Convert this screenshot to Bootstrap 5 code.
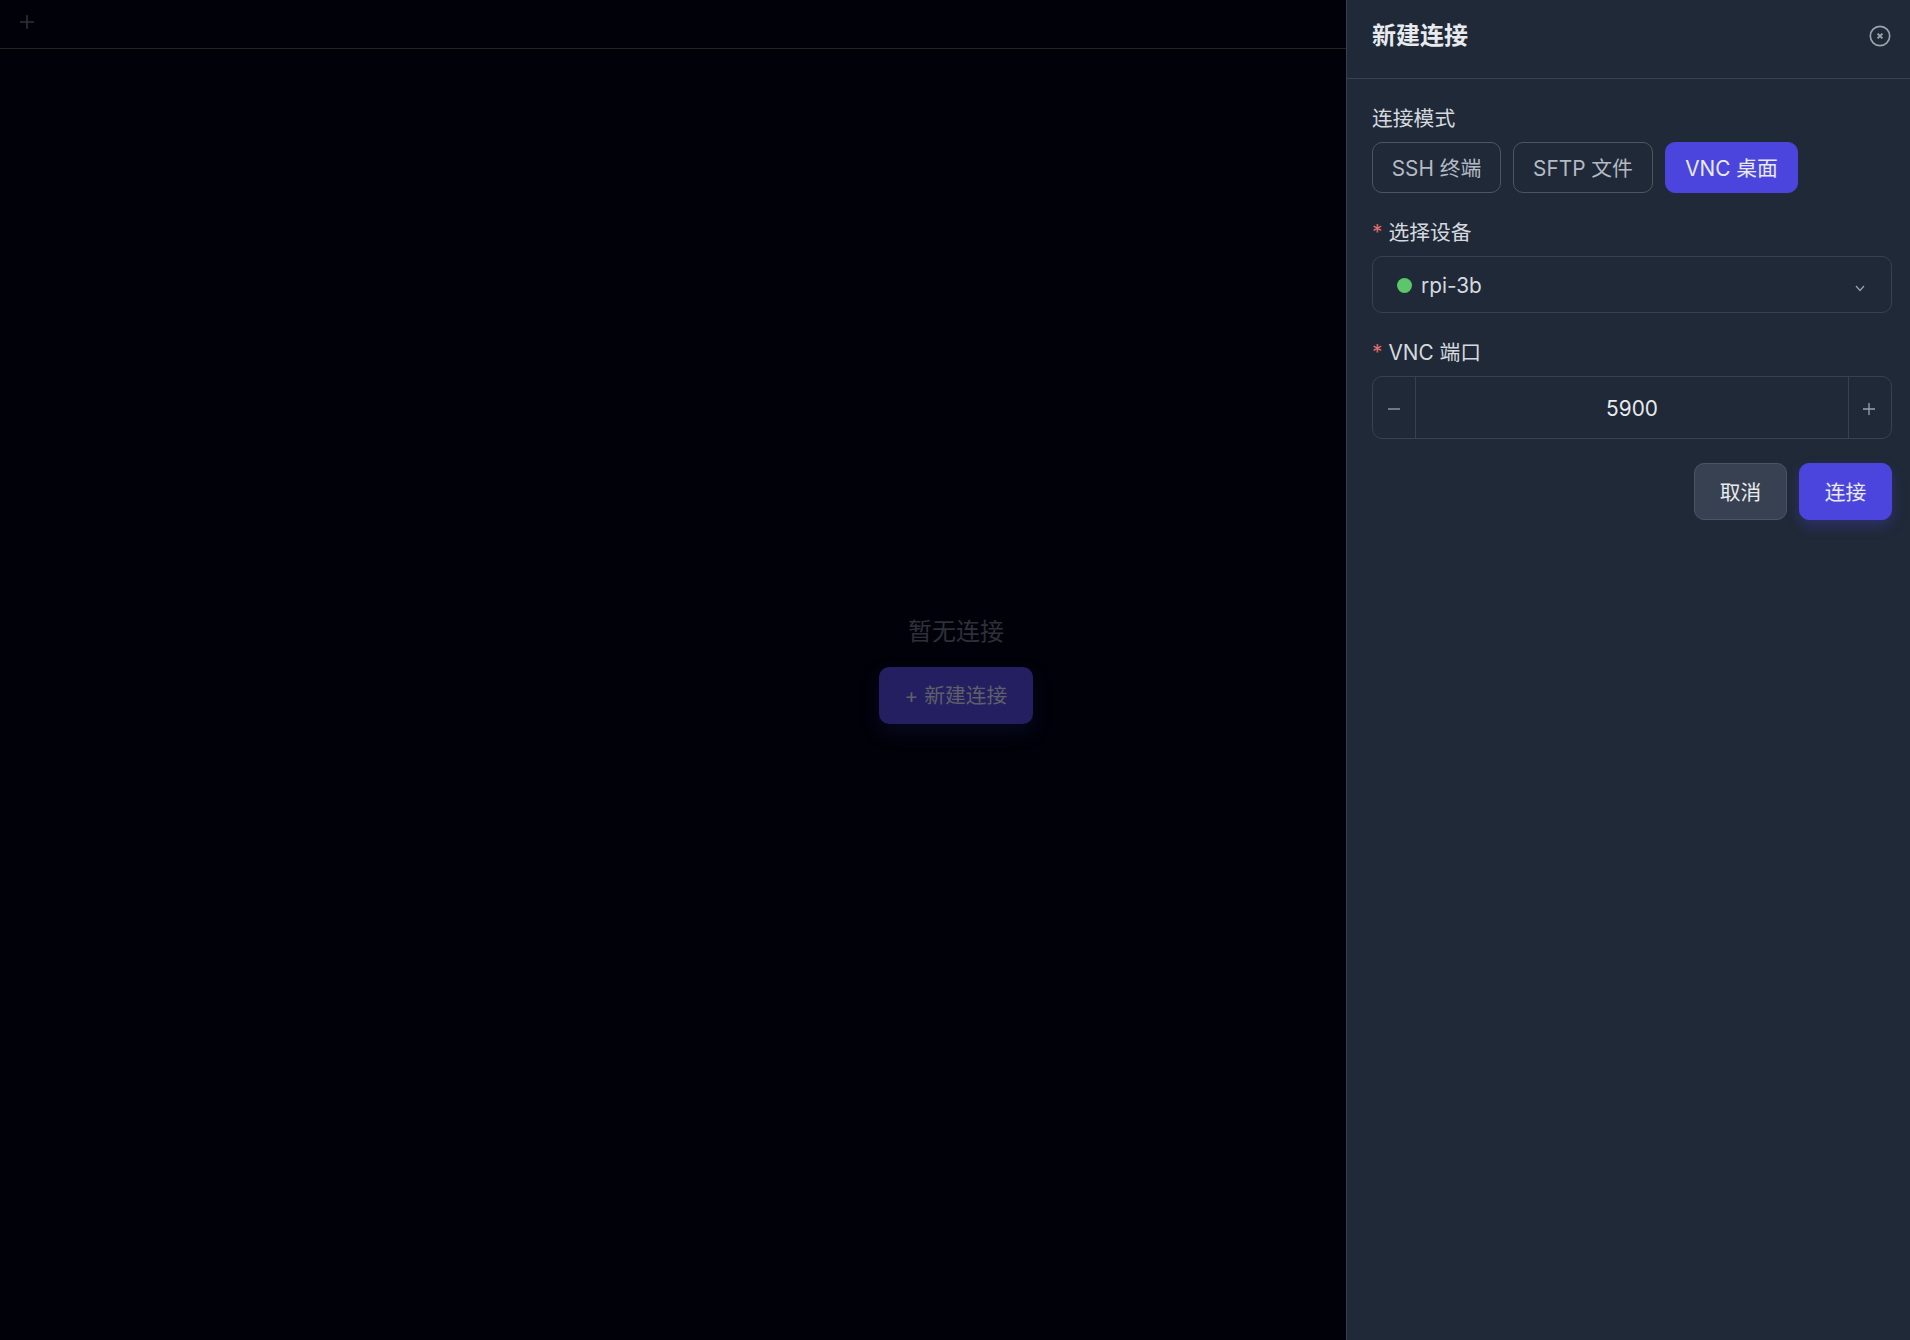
<!DOCTYPE html>
<html lang="zh"><head><meta charset="utf-8">
<link href="https://cdn.jsdelivr.net/npm/bootstrap@5.3.0/dist/css/bootstrap.min.css" rel="stylesheet">
<style>
html,body{height:100%;margin:0;overflow:hidden}
body{background:#010209;font-family:Inter,"Noto Sans CJK SC",sans-serif;color:#e5e7eb;-webkit-font-smoothing:antialiased}
.app-shell{height:1340px}
.tab-strip{height:49px;border-bottom:1px solid #23241f;padding:0 0 0 18px}
.tab-add{width:18px;height:18px;margin-top:-5px;color:#2f3138;display:block}
.empty-wrap{padding-left:2px}
.empty-msg{color:#2e3039;font-size:24px;line-height:32px;margin:-50px 0 19px}
.empty-btn{background:#231f60;color:#5f5f6a;border:0;border-radius:10px;height:57px;width:154px;font-size:20.8px;padding:2px 0 0;box-shadow:0 8px 18px rgba(30,27,90,.3)}
.side-pane{position:absolute;top:0;right:0;bottom:0;width:564px;background:#1f2937;border-left:1px solid #374151}
.side-head{height:79px;border-bottom:1px solid #374151;padding:0 19px 0 25px}
.side-title{font-size:24px;font-weight:600;color:#e8eaee;margin:0 0 5px}
.close-ico{width:22px;height:22px;color:#9ca3af;display:block;margin-bottom:7px}
.side-body{padding:26px 18px 0 25px}
.fld-label{font-size:20.8px;line-height:28px;color:#d5d9df;margin-bottom:9px;display:block}
.req{color:#e06c6c;margin-right:6px}
.mode-btn{height:51px;border:1px solid #4b5563;border-radius:10px;background:transparent;color:#b4bac4;font-size:20.8px;padding:2px 0 0;width:129px}
.mode-btn.wide-b{width:140px}
.mode-btn.on{background:#4c45dd;border-color:#4c45dd;color:#e8eaf0;width:133px}
.dev-select{height:57px;border:1px solid #374151;border-radius:10px;padding:2px 26px 0 24px;font-size:20.8px;color:#d5d9df}
.dev-dot{width:15px;height:15px;border-radius:50%;background:#5cc66a;margin-right:9px;margin-top:-1px}
.chev{width:10px;height:7px;color:#9ca3af;margin-top:6px}
.num-box{height:63px;border:1px solid #374151;border-radius:10px;font-size:20.8px;color:#e8eaee}
.num-side{width:43px;flex:none;color:#9ca3af}
.num-side.lft{border-right:1px solid #374151}
.num-side.rgt{border-left:1px solid #374151;padding-right:2px}
.num-mid{padding-top:2px}
.num-ico{width:14px;height:14px;display:block;margin-top:2px}
.act-btn{height:57px;border-radius:10px;font-size:20.8px;width:93px;padding:2px 0 0;border:1px solid #4b5563;background:#374151;color:#e8eaee}
.act-btn.go{border-color:#4c45dd;background:#4c45dd;box-shadow:0 6px 14px rgba(79,70,229,.3)}
.gap-mode{gap:12px}.gap-acts{gap:12px}
.mb-a{margin-bottom:26px}.mb-b{margin-bottom:26px}.mb-c{margin-bottom:24px}
</style></head><body>
<div class="app-shell d-flex flex-column position-relative">
  <div class="tab-strip d-flex align-items-center">
    <svg class="tab-add" viewBox="0 0 18 18" fill="none" stroke="currentColor" stroke-width="1.6"><path d="M9 2v14M2 9h14"/></svg>
  </div>
  <div class="empty-wrap flex-grow-1 d-flex flex-column align-items-center justify-content-center">
    <div class="empty-msg">暂无连接</div>
    <button class="btn empty-btn">+ 新建连接</button>
  </div>
  <aside class="side-pane d-flex flex-column">
    <div class="side-head d-flex align-items-center justify-content-between">
      <h5 class="side-title">新建连接</h5>
      <svg class="close-ico" viewBox="0 0 20 20" fill="none" stroke="currentColor" stroke-width="1.5"><circle cx="10" cy="10" r="8.8"/><path d="M7.8 7.8l4.4 4.4M12.2 7.8l-4.4 4.4" stroke-width="1.8"/></svg>
    </div>
    <div class="side-body">
      <label class="fld-label">连接模式</label>
      <div class="d-flex gap-mode mb-a">
        <button class="btn mode-btn">SSH 终端</button>
        <button class="btn mode-btn wide-b">SFTP 文件</button>
        <button class="btn mode-btn on">VNC 桌面</button>
      </div>
      <label class="fld-label"><span class="req">*</span>选择设备</label>
      <div class="dev-select d-flex align-items-center justify-content-between mb-b">
        <span class="d-flex align-items-center"><span class="dev-dot"></span>rpi-3b</span>
        <svg class="chev" viewBox="0 0 10 7" fill="none" stroke="currentColor" stroke-width="1.2"><path d="M1 1l4 4.5L9 1"/></svg>
      </div>
      <label class="fld-label"><span class="req">*</span>VNC 端口</label>
      <div class="num-box d-flex mb-c">
        <div class="num-side lft d-flex align-items-center justify-content-center"><svg class="num-ico" viewBox="0 0 14 14" fill="none" stroke="currentColor" stroke-width="1.3"><path d="M1 7h12"/></svg></div>
        <div class="num-mid flex-grow-1 d-flex align-items-center justify-content-center">5900</div>
        <div class="num-side rgt d-flex align-items-center justify-content-center"><svg class="num-ico" viewBox="0 0 14 14" fill="none" stroke="currentColor" stroke-width="1.3"><path d="M7 1v12M1 7h12"/></svg></div>
      </div>
      <div class="d-flex justify-content-end gap-acts">
        <button class="btn act-btn">取消</button>
        <button class="btn act-btn go">连接</button>
      </div>
    </div>
  </aside>
</div>
<script src="https://cdn.jsdelivr.net/npm/bootstrap@5.3.0/dist/js/bootstrap.bundle.min.js"></script>
</body></html>
